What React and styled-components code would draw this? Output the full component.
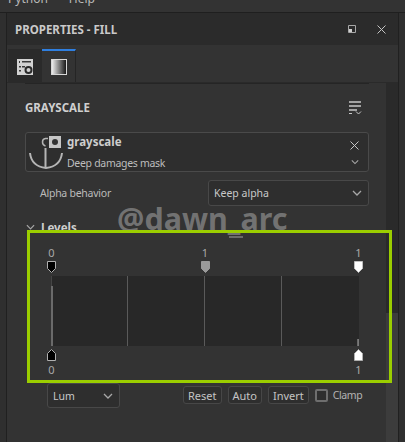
import styled, { createGlobalStyle } from "styled-components";

const GlobalStyle = createGlobalStyle`
  html, body { margin: 0; padding: 0; background: #333333; }
  * { box-sizing: border-box; }
`;

const Page = styled.div`
  position: relative;
  width: 405px;
  height: 442px;
  overflow: hidden;
  background: #333333;
  color: #c8c8c8;
  font-family: "Noto Sans", "Open Sans", sans-serif;
  font-size: 11px;
  display: flex;
  flex-direction: column;
`;

const MenuBar = styled.div`
  flex: none;
  height: 13px;
  padding: 0 0 5px 8px;
  display: flex;
  align-items: flex-end;
  gap: 21px;
  overflow: hidden;
  background: #333333;
  border-bottom: 1px solid #1f1f1f;
  font-size: 12px;
  line-height: 16px;
  color: #b9b9b9;
`;

const Dock = styled.div`
  flex: 1;
  min-height: 0;
  display: flex;
  background: #333333;
`;

const DockEdge = styled.div`
  flex: none;
  width: 7px;
  background: #2f2f2f;
  border-right: 1px solid #202020;
`;

const DockEdgeRight = styled(DockEdge)`
  border-right: none;
  border-left: 1px solid #202020;
`;

const Panel = styled.div`
  flex: 1;
  min-width: 0;
  display: flex;
  flex-direction: column;
`;

const TitleBar = styled.div`
  flex: none;
  height: 32px;
  padding: 0 12px 0 8px;
  display: flex;
  align-items: center;
  justify-content: space-between;
  background: #2b2b2b;
`;

const Title = styled.div`
  font-size: 11.5px;
  font-weight: 700;
  color: #c9c9c9;
`;

const TitleIcons = styled.div`
  display: flex;
  align-items: center;
  gap: 21px;
`;

const Tabs = styled.div`
  flex: none;
  height: 38px;
  padding: 4px 0 0 1px;
  display: flex;
  background: #333333;
  border-bottom: 1px solid #2a2a2a;
`;

const Tab = styled.div`
  width: 34px;
  height: 33px;
  display: flex;
  align-items: center;
  justify-content: center;
  background: ${({ $active }) => ($active ? "#333333" : "#2a2a2a")};
  border-top: 2px solid ${({ $active }) => ($active ? "#2f7fe0" : "#2a2a2a")};
  border-right: ${({ $active }) => ($active ? "1px solid #252525" : "none")};
`;

const Body = styled.div`
  flex: 1;
  min-height: 0;
  display: flex;
`;

const Content = styled.div`
  flex: 1;
  min-width: 0;
  padding: 0 17px 0 18px;
  background: #333333;
`;

const ScrollTrack = styled.div`
  flex: none;
  width: 12px;
  display: flex;
  flex-direction: column;
  justify-content: flex-end;
  background: #2a2a2a;
`;

const ScrollThumb = styled.div`
  height: 129px;
  background: #3c3c3c;
`;

const SectionHead = styled.div`
  height: 49px;
  padding: 0 7px 1px 0;
  display: flex;
  align-items: center;
  justify-content: space-between;
  border-top: 1px solid #252525;
`;

const SectionTitle = styled.div`
  font-size: 11.5px;
  font-weight: 700;
  color: #cfcfcf;
`;

const ResourceCard = styled.div`
  height: 40px;
  display: flex;
  border: 1px solid #4a4a4a;
  border-radius: 3px;
  background: #2e2e2e;
`;

const AnchorSlot = styled.div`
  flex: none;
  width: 41px;
  display: flex;
  align-items: center;
  justify-content: center;
`;

const ResourceText = styled.div`
  flex: 1;
  display: flex;
  flex-direction: column;
  justify-content: space-between;
  padding: 1px 0 0;
  line-height: 16px;
`;

const ResourceName = styled.div`
  font-weight: 700;
  font-size: 11.5px;
  color: #cdcdcd;
`;

const ResourceSub = styled.div`
  font-size: 10.5px;
  letter-spacing: -0.3px;
  color: #bdbdbd;
`;

const ResourceActions = styled.div`
  flex: none;
  width: 27px;
  display: flex;
  flex-direction: column;
  align-items: center;
  justify-content: space-between;
  padding: 8px 0 6px;
`;

const FieldRow = styled.div`
  margin-top: 8px;
  height: 26px;
  padding-left: 15px;
  display: flex;
  align-items: center;
  justify-content: space-between;
`;

const FieldLabel = styled.div`
  font-size: 10.5px;
  letter-spacing: -0.25px;
  color: #bbbbbb;
`;

const Select = styled.div`
  width: ${({ $width }) => $width}px;
  height: ${({ $height }) => $height}px;
  padding: 0 6px 0 5px;
  display: flex;
  align-items: center;
  justify-content: space-between;
  background: #2e2e2e;
  border: 1px solid #484848;
  border-radius: 3px;
  font-size: 10.5px;
  color: #c8c8c8;
`;

const LevelsHead = styled.div`
  margin-top: 12px;
  height: 18px;
  padding-left: 1px;
  display: flex;
  align-items: center;
  gap: 6px;
  font-size: 11.5px;
  font-weight: 700;
  color: #cfcfcf;
`;

const Grip = styled.div`
  width: 14px;
  height: 2px;
  margin: 0 0 8px 204px;
  background: #6b6b6b;
`;

const HandleRow = styled.div`
  width: 320px;
  margin-left: 20px;
  display: flex;
  justify-content: space-between;
`;

const Handle = styled.div`
  width: 13px;
  display: flex;
  flex-direction: column;
  align-items: center;
  gap: ${({ $gap }) => $gap}px;
  line-height: 14px;
  color: #a9a9a9;
`;

const Plot = styled.div`
  position: relative;
  width: 308px;
  height: 70px;
  margin: 3px 0 3px 26px;
  display: grid;
  grid-template-columns: 76px 77px 77px 78px;
  background: #282828;
`;

const PlotCell = styled.div`
  border-left: 1px solid #5a5a5a;
  &:first-child {
    border-left-color: #454545;
  }
  &:last-child {
    border-right: 1px solid #646464;
  }
`;

const CurveStart = styled.div`
  position: absolute;
  left: 0;
  top: 10px;
  bottom: 0;
  width: 2px;
  background: #6a6a6a;
`;

const CurveEnd = styled.div`
  position: absolute;
  right: 0;
  bottom: 0;
  width: 2px;
  height: 7px;
  background: linear-gradient(to right, #6a6a6a 50%, #7a7a7a 50%);
`;

const Footer = styled.div`
  margin-top: 6px;
  padding-left: 22px;
  display: flex;
  align-items: flex-start;
`;

const Buttons = styled.div`
  margin-left: 63px;
  padding-top: 3px;
  display: flex;
  align-items: center;
  gap: 6px;
`;

const Button = styled.div`
  height: 18px;
  padding: 0 4px;
  display: flex;
  align-items: center;
  background: #2e2e2e;
  border: 1px solid #474747;
  border-radius: 3px;
  color: #c4c4c4;
`;

const ClampLabel = styled.div`
  display: flex;
  align-items: center;
  gap: 5px;
  font-size: 10.5px;
  letter-spacing: -0.4px;
  color: #b4b4b4;
`;

const Checkbox = styled.div`
  width: 13px;
  height: 13px;
  border: 2px solid #6e6e6e;
  border-radius: 2px;
  background: #2e2e2e;
`;

const Highlight = styled.div`
  position: absolute;
  left: 27px;
  top: 230px;
  width: 365px;
  height: 153px;
  border: 3px solid #9bce00;
  pointer-events: none;
`;

const Watermark = styled.div`
  position: absolute;
  left: 117px;
  top: 198px;
  font-family: "Noto Sans", sans-serif;
  font-size: 30.5px;
  font-weight: 700;
  line-height: 40px;
  color: rgba(140, 140, 140, 0.72);
  pointer-events: none;
`;

const Chevron = ({ color = "#a8a8a8", w = 10 }) => (
  <svg width={w} height="6" viewBox="0 0 10 6" fill="none">
    <path d="M1 1l4 4 4-4" stroke={color} strokeWidth="1.3" />
  </svg>
);

const Close = ({ size = 9 }) => (
  <svg width={size} height={size} viewBox="0 0 9 9" fill="none">
    <path d="M.5.5l8 8M8.5.5l-8 8" stroke="#c4c4c4" strokeWidth="1" />
  </svg>
);

const RestoreIcon = () => (
  <svg width="8" height="8" viewBox="0 0 8 8">
    <path d="M.5.5h7v7h-7z" fill="none" stroke="#a8a8a8" />
    <path d="M1 4h3v3H1z" fill="#d0d0d0" />
  </svg>
);

const SettingsIcon = () => (
  <svg width="16" height="16" viewBox="0 0 16 16">
    <rect width="16" height="16" fill="#d2d2d2" />
    <path d="M2 2h1v2H2zM5 2h9v1.500H5zM2 7h2v1.500H2zM2 11h2v1.500H2zM5 7h3v1.500H5z" fill="#3a3a3a" />
    <circle cx="11.500" cy="11" r="3" fill="none" stroke="#2a2a2a" strokeWidth="2" />
  </svg>
);

const GradientIcon = () => (
  <svg width="16" height="16" viewBox="0 0 16 16">
    <defs>
      <linearGradient id="tabGrad" x1="0" x2="1" y1="0" y2="0">
        <stop offset="0" stopColor="#f5f5f5" />
        <stop offset="1" stopColor="#111111" />
      </linearGradient>
    </defs>
    <rect x=".5" y=".5" width="15" height="15" fill="url(#tabGrad)" stroke="#d8d8d8" />
  </svg>
);

const MenuIcon = () => (
  <svg width="13" height="14" viewBox="0 0 13 14" fill="none">
    <path d="M0 1h12M0 5h12M0 9h8" stroke="#c8c8c8" strokeWidth="1.500" />
    <path d="M0 12.500h3" stroke="#c8c8c8" strokeWidth="1" />
    <path d="M7 10.500l2.500 2.500 2.500-2.500" stroke="#c8c8c8" strokeWidth="1" />
  </svg>
);

const AnchorIcon = () => (
  <svg width="36" height="34" viewBox="0 0 36 34" fill="none">
    <path d="M1 18c1 9 7 14 16 15 9-1 15-6 16-15" stroke="#b5b5b5" strokeWidth="2" />
    <path d="M16.500 13v20" stroke="#b5b5b5" strokeWidth="2" />
    <path d="M19 3.500h-2.500c-2 .3-3 1.500-3 3.500s1 3.500 3 4" stroke="#b5b5b5" strokeWidth="1.500" />
    <rect x="20" y="1" width="12" height="12" fill="#c6c6c6" />
    <circle cx="26" cy="7" r="3" fill="#333333" />
  </svg>
);

const Pin = ({ fill, stroke, up }) => (
  <svg width="9" height="12" viewBox="0 0 9 12">
    <path
      d={up ? "M.5 11.500V4.500L4.500.5l4 4v7z" : "M.5.5v7l4 4 4-4v-7z"}
      fill={fill}
      stroke={stroke}
    />
  </svg>
);

const handleDefs = [
  { label: "0", fill: "#000000", stroke: "#b0b0b0" },
  { label: "1", fill: "#9a9a9a", stroke: "#9a9a9a" },
  { label: "1", fill: "#ffffff", stroke: "#c0c0c0" },
];

export default function App() {
  return (
    <Page>
      <GlobalStyle />
      <MenuBar>
        <span>Python</span>
        <span>Help</span>
      </MenuBar>
      <Dock>
        <DockEdge />
        <Panel>
          <TitleBar>
            <Title>PROPERTIES - FILL</Title>
            <TitleIcons>
              <RestoreIcon />
              <Close />
            </TitleIcons>
          </TitleBar>
          <Tabs>
            <Tab>
              <SettingsIcon />
            </Tab>
            <Tab $active>
              <GradientIcon />
            </Tab>
          </Tabs>
          <Body>
            <Content>
              <SectionHead>
                <SectionTitle>GRAYSCALE</SectionTitle>
                <MenuIcon />
              </SectionHead>
              <ResourceCard>
                <AnchorSlot>
                  <AnchorIcon />
                </AnchorSlot>
                <ResourceText>
                  <ResourceName>grayscale</ResourceName>
                  <ResourceSub>Deep damages mask</ResourceSub>
                </ResourceText>
                <ResourceActions>
                  <Close />
                  <Chevron w={8} />
                </ResourceActions>
              </ResourceCard>
              <FieldRow>
                <FieldLabel>Alpha behavior</FieldLabel>
                <Select $width={161} $height={26}>
                  Keep alpha
                  <Chevron />
                </Select>
              </FieldRow>
              <LevelsHead>
                <Chevron w={9} />
                Levels
              </LevelsHead>
              <Grip />
              <HandleRow>
                {handleDefs.map((h, i) => (
                  <Handle key={i} $gap={1}>
                    {h.label}
                    <Pin fill={h.fill} stroke={h.stroke} />
                  </Handle>
                ))}
              </HandleRow>
              <Plot>
                <PlotCell />
                <PlotCell />
                <PlotCell />
                <PlotCell />
                <CurveStart />
                <CurveEnd />
              </Plot>
              <HandleRow>
                {[handleDefs[0], handleDefs[2]].map((h, i) => (
                  <Handle key={i} $gap={2}>
                    <Pin fill={h.fill} stroke="#b0b0b0" up />
                    {h.label}
                  </Handle>
                ))}
              </HandleRow>
              <Footer>
                <Select $width={73} $height={25}>
                  Lum
                  <Chevron />
                </Select>
                <Buttons>
                  <Button>Reset</Button>
                  <Button>Auto</Button>
                  <Button>Invert</Button>
                  <ClampLabel>
                    <Checkbox />
                    Clamp
                  </ClampLabel>
                </Buttons>
              </Footer>
            </Content>
            <ScrollTrack>
              <ScrollThumb />
            </ScrollTrack>
          </Body>
        </Panel>
        <DockEdgeRight />
      </Dock>
      <Watermark>@dawn_arc</Watermark>
      <Highlight />
    </Page>
  );
}
